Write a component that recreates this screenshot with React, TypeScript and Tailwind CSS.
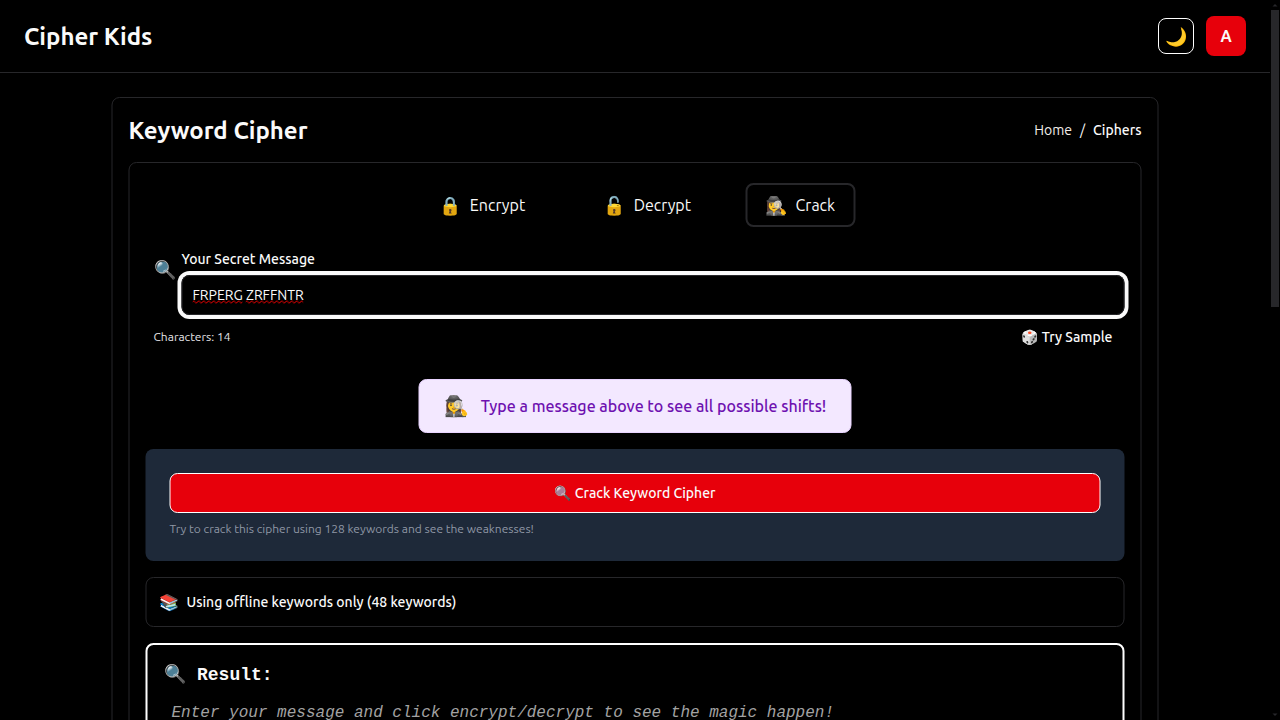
const tabs = [
  { icon: "🔒", label: "Encrypt", style: "border-transparent" },
  { icon: "🔓", label: "Decrypt", style: "border-transparent ml-[38px]" },
  { icon: "🕵️‍♀️", label: "Crack", style: "border-zinc-800 ml-[34px]" },
];

function Header() {
  return (
    <header className="flex h-[73px] items-center justify-between border-b border-zinc-800 px-6">
      <span className="h-8 text-2xl leading-[34px] font-semibold">Cipher Kids</span>
      <div className="flex items-center gap-3">
        <button className="flex size-9 items-center justify-center rounded-lg border border-white text-lg">🌙</button>
        <div className="flex size-10 items-center justify-center rounded-lg bg-[#e7000b] text-base font-semibold">A</div>
      </div>
    </header>
  );
}

function ModeTabs() {
  return (
    <div className="flex justify-center py-1 pl-[4.5px]">
      {tabs.map((t) => (
        <button key={t.label} className={`flex h-11 items-center gap-[8.5px] rounded-lg border-2 px-[18px] ${t.style}`}>
          <span className="text-lg">{t.icon}</span>
          <span className="text-base">{t.label}</span>
        </button>
      ))}
    </div>
  );
}

function Misspelled({ children }: { children: string }) {
  return (
    <span className="relative">
      {children}
      <svg className="absolute top-[15px] left-0 h-1 w-full">
        <defs>
          <pattern id="wave" width="5" height="4" patternUnits="userSpaceOnUse">
            <path d="M-1.25 3.2L1.25 0.8L3.75 3.2L6.25 0.8" fill="none" stroke="#f00000" strokeWidth="1" />
          </pattern>
        </defs>
        <rect width="100%" height="4" fill="url(#wave)" />
      </svg>
    </span>
  );
}

function MessageField() {
  return (
    <div className="mt-[18px]">
      <div className="flex pl-2">
        <span className="mt-1.5 w-7 text-lg">🔍</span>
        <div className="flex-1">
          <div className="mb-1.5 text-sm leading-5 font-medium">Your Secret Message</div>
          <div className="flex h-10 items-center rounded-lg border border-zinc-800 px-2.5 text-sm ring-4 ring-zinc-50">
            <Misspelled>FRPERG</Misspelled>
            <span className="whitespace-pre"> </span>
            <Misspelled>ZRFFNTR</Misspelled>
          </div>
        </div>
      </div>
      <div className="flex h-11 items-center justify-between pr-3 pl-2">
        <span className="text-xs text-zinc-200">Characters: 14</span>
        <button className="text-sm font-medium">🎲 Try Sample</button>
      </div>
    </div>
  );
}

function Scrollbar() {
  return (
    <div className="flex h-full w-2.5 shrink-0 flex-col items-center bg-black">
      <svg className="h-2.5 w-2.5 shrink-0" viewBox="0 0 10 10">
        <path d="M5 4L7.5 6.5H2.5Z" fill="#27272a" />
      </svg>
      <div className="h-[297px] w-2 bg-zinc-800" />
      <div className="flex-1" />
      <svg className="h-2.5 w-2.5 shrink-0" viewBox="0 0 10 10">
        <path d="M5 6L7.5 3.5H2.5Z" fill="#27272a" />
      </svg>
    </div>
  );
}

export default function App() {
  return (
    <div className="flex h-[720px] w-[1280px] overflow-hidden bg-black font-[Ubuntu,'Noto_Sans',sans-serif] text-zinc-50">
      <div className="w-[1270px] shrink-0">
        <Header />
        <main className="mt-6 ml-[111px] w-[1047px] [transform:translateX(0.5px)] rounded-lg border border-zinc-800 p-4">
          <div className="flex items-center justify-between">
            <h1 className="h-8 text-2xl leading-[34px] font-semibold">Keyword Cipher</h1>
            <nav className="flex gap-2 text-sm">
              <span className="text-[#f3eeea]">Home</span>
              <span>/</span>
              <span className="font-medium">Ciphers</span>
            </nav>
          </div>
          <section className="mt-4 rounded-lg border border-zinc-800 p-4">
            <ModeTabs />
            <MessageField />
            <div className="mt-5 flex justify-center">
              <div className="flex items-center gap-3 rounded-lg border border-purple-200 bg-purple-100 px-6 py-3 font-medium text-purple-800">
                <span className="text-xl">🕵️‍♀️</span>
                <span>Type a message above to see all possible shifts!</span>
              </div>
            </div>
            <div className="mt-4 rounded-lg bg-gray-800 p-6">
              <button className="h-10 w-full rounded-lg border border-white bg-[#e7000b] text-sm font-medium">
                🔍 Crack Keyword Cipher
              </button>
              <p className="mt-2 text-xs text-[#8f97a5]">
                Try to crack this cipher using 128 keywords and see the weaknesses!
              </p>
            </div>
            <div className="mt-4 flex items-center gap-2 rounded-lg border border-zinc-800 p-3">
              <span className="text-base">📚</span>
              <span className="text-sm font-medium">Using offline keywords only (48 keywords)</span>
            </div>
            <div className="mt-4 rounded-lg border-2 border-white p-4 font-[Liberation_Mono,monospace]">
              <h3 className="flex gap-[11.5px] text-lg font-bold">
                <span>🔍</span>
                <span>Result:</span>
              </h3>
              <p className="p-2 pt-3 text-base text-[#a3a3a3] italic">
                Enter your message and click encrypt/decrypt to see the magic happen!
              </p>
            </div>
          </section>
        </main>
      </div>
      <Scrollbar />
    </div>
  );
}
